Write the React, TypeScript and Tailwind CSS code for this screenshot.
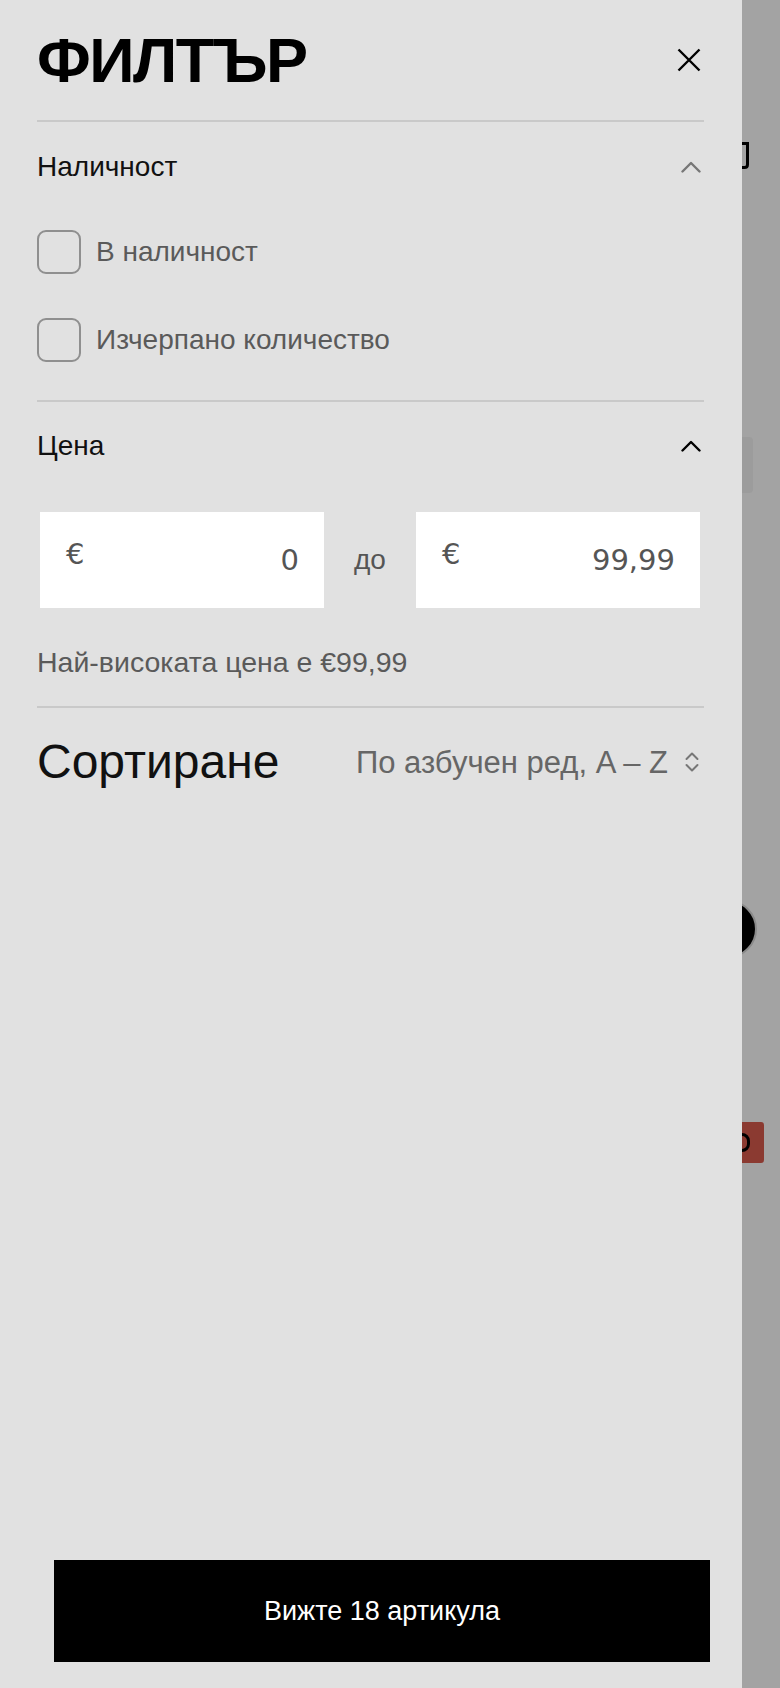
import React from "react";

function ChevronUp({ color }: { color: string }) {
  return (
    <svg width="20" height="12" viewBox="0 0 20 12" fill="none" className="mr-[3px]">
      <polyline points="1.5,10.5 10,2 18.5,10.5" stroke={color} strokeWidth="2.4" strokeLinecap="round" strokeLinejoin="round" />
    </svg>
  );
}

function Checkbox({ label }: { label: string }) {
  return (
    <label className="flex h-[44px] items-center">
      <span className="h-[44px] w-[44px] rounded-[9px] border-2 border-[#8f8f8f]" />
      <span className="ml-[15px] text-[28px] leading-none text-[#5a5a5a]">{label}</span>
    </label>
  );
}

function PriceBox({ value }: { value: string }) {
  return (
    <div className="flex h-[96px] w-[284px] items-center justify-between bg-white pl-[26px] pr-[25px] font-['DejaVu_Sans',sans-serif] text-[29px] leading-none text-[#555]">
      <span className="relative top-[-6px]">€</span>
      <span>{value}</span>
    </div>
  );
}

function Divider() {
  return <div className="h-[2px] w-full bg-[#c9c9c9]" />;
}

export default function App() {
  return (
    <div className="flex h-[1688px] w-[780px] overflow-hidden font-['Liberation_Sans',Arial,sans-serif]">
      <aside className="flex w-[742px] shrink-0 flex-col bg-[#e1e1e1]">
        <div className="pl-[37px] pr-[38px]">
          <header className="flex h-[120px] items-center justify-between">
            <h1 className="text-[63px] font-bold leading-none tracking-[-1.5px] text-black">ФИЛТЪР</h1>
            <button className="mr-[3px]" aria-label="Затвори">
              <svg width="24" height="24" viewBox="0 0 24 24" fill="none">
                <path d="M1.5 1.5L22.5 22.5M22.5 1.5L1.5 22.5" stroke="#000" strokeWidth="2.4" />
              </svg>
            </button>
          </header>
          <Divider />

          <div className="flex h-[90px] items-center justify-between">
            <span className="text-[28px] leading-none text-[#111]">Наличност</span>
            <ChevronUp color="#777" />
          </div>
          <div className="flex flex-col gap-[44px] pb-[38px] pt-[18px]">
            <Checkbox label="В наличност" />
            <Checkbox label="Изчерпано количество" />
          </div>
          <Divider />

          <div className="flex h-[88px] items-center justify-between">
            <span className="text-[28px] leading-none text-[#111]">Цена</span>
            <ChevronUp color="#000" />
          </div>
          <div className="flex items-center pl-[3px] pr-[4px] pt-[22px]">
            <PriceBox value="0" />
            <span className="flex-1 text-center text-[28px] leading-none text-[#555]">до</span>
            <PriceBox value="99,99" />
          </div>
          <p className="pb-[30px] pt-[40px] text-[28.5px] leading-[28px] text-[#5a5a5a]">Най-високата цена е €99,99</p>
          <Divider />

          <div className="flex h-[108px] items-center justify-between">
            <span className="text-[48px] leading-none text-[#111]">Сортиране</span>
            <div className="flex items-center gap-[16px]">
              <span className="text-[31px] leading-none text-[#666]">По азбучен ред, A – Z</span>
              <svg width="16" height="24" viewBox="0 0 16 24" fill="none" className="mr-[4px]">
                <polyline points="2.5,9 8,3.5 13.5,9" stroke="#777" strokeWidth="2" strokeLinecap="round" strokeLinejoin="round" />
                <polyline points="2.5,15 8,20.5 13.5,15" stroke="#777" strokeWidth="2" strokeLinecap="round" strokeLinejoin="round" />
              </svg>
            </div>
          </div>
        </div>

        <div className="flex-1" />

        <div className="pb-[26px] pl-[54px] pr-[32px]">
          <button className="flex h-[102px] w-full items-center justify-center bg-black text-[27px] leading-none text-white">
            Вижте 18 артикула
          </button>
        </div>
      </aside>

      <div className="relative flex-1 overflow-hidden bg-[#a3a3a3]">
        <svg width="8" height="27" viewBox="0 0 8 27" fill="none" className="absolute left-0 top-[142px]">
          <path d="M0 1.5H5.5V22.5Q5.5 25.5 2.5 25.5H0" stroke="#000" strokeWidth="3" />
        </svg>
        <div className="absolute left-0 top-[437px] h-[56px] w-[11px] rounded-r-[4px] bg-[#9c9c9c]" />
        <div className="absolute left-[-43px] top-[900px] h-[58px] w-[58px] rounded-full border-2 border-[#8a8a8a] bg-black" />
        <div className="absolute left-[-20px] top-[1122px] h-[41px] w-[42px] rounded-[3px] bg-[#8b3a31]" />
        <div className="absolute left-[-8px] top-[1133px] h-[19px] w-[16px] rounded-full border-[3px] border-black" />
      </div>
    </div>
  );
}
